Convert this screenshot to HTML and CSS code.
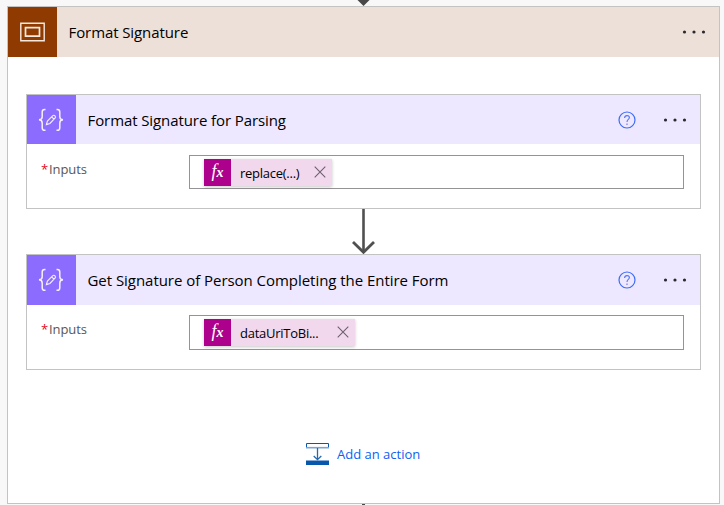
FILE: index.html
```html
<!DOCTYPE html>
<html lang="en">
<head>
<meta charset="utf-8">
<title>Format Signature</title>
<link rel="stylesheet" href="styles.css">
</head>
<body>
<svg class="defs" width="0" height="0" aria-hidden="true">
  <symbol id="compose" viewBox="0 0 26 24">
    <g fill="none" stroke="#f4efff" stroke-width="1.5">
      <path d="M7.5 1.5H6.6Q4.2 1.5 4.2 4V8.7Q4.2 11.6 1 11.8Q4.2 12 4.2 15V19.7Q4.2 22.3 6.6 22.3H7.5M18.5 1.5H19.4Q21.8 1.5 21.8 4V8.7Q21.8 11.6 25 11.8Q21.8 12 21.8 15V19.7Q21.8 22.3 19.4 22.3H18.5"/>
      <path stroke-width="1.1" d="M8.4 16.6L9.4 13L14.8 7.6Q16 6.8 17 7.8Q18 8.9 17.2 10L11.9 15.4ZM13.6 8.8L16 11.2"/>
    </g>
  </symbol>
  <symbol id="help" viewBox="0 0 18 18">
    <circle cx="9" cy="9" r="8" fill="none" stroke="#3b6cf6" stroke-width="1.2"/>
    <path d="M6.6 6.9Q6.7 4.6 9 4.6Q11.4 4.6 11.4 6.6Q11.4 7.7 10.1 8.6Q9 9.4 9 10.9" fill="none" stroke="#5375f2" stroke-width="1.1"/>
    <path d="M9 12.5V13.9" stroke="#7c83f3" stroke-width="1.3"/>
  </symbol>
  <symbol id="dots" viewBox="0 0 24 4">
    <g fill="#2b2930"><circle cx="2.5" cy="2" r="1.6"/><circle cx="12" cy="2" r="1.6"/><circle cx="21.5" cy="2" r="1.6"/></g>
  </symbol>
  <symbol id="close" viewBox="0 0 12 12">
    <path d="M.7 .7L11.3 11.3M11.3 .7L.7 11.3" stroke="#6c6070" stroke-width="1.1"/>
  </symbol>
</svg>

<svg class="entry" viewBox="0 0 14 6"><path d="M1.5 0H13.5L7.5 6Z" fill="#484848"/></svg>

<main class="scope">
  <header class="scope-head">
    <div class="badge scope-badge">
      <svg width="25" height="20" viewBox="0 0 25 20"><g fill="none" stroke="#f5e9df" stroke-width="1.4"><path d="M.8 1.2H24.2V18.8H.8Z"/><path d="M5.5 5.6H19.5V14.2H5.5Z" stroke-width="1.7"/></g></svg>
    </div>
    <h1 class="title scope-title">Format Signature</h1>
    <svg class="more"><use href="#dots"/></svg>
  </header>

  <div class="scope-body">
    <section class="card">
      <header class="card-head">
        <div class="badge"><svg class="compose"><use href="#compose"/></svg></div>
        <h2 class="title parse-title">Format Signature for Parsing</h2>
        <svg class="help"><use href="#help"/></svg>
        <svg class="more"><use href="#dots"/></svg>
      </header>
      <div class="field">
        <div class="label"><span class="star">*</span><span>Inputs</span></div>
        <div class="input">
          <div class="token token-replace"><span class="fx"><i>f</i><i class="x">x</i></span><span class="expr">replace(...)</span><svg class="close"><use href="#close"/></svg></div>
        </div>
      </div>
    </section>

    <svg class="arrow" viewBox="0 0 24 45"><g fill="none" stroke="#505050"><path d="M12.5 0V43" stroke-width="2.6"/><path d="M2 33L12.5 43.3L23 33" stroke-width="2.8"/></g></svg>

    <section class="card card-tall">
      <header class="card-head">
        <div class="badge"><svg class="compose"><use href="#compose"/></svg></div>
        <h2 class="title get-title">Get Signature of Person Completing the Entire Form</h2>
        <svg class="help"><use href="#help"/></svg>
        <svg class="more"><use href="#dots"/></svg>
      </header>
      <div class="field">
        <div class="label"><span class="star">*</span><span>Inputs</span></div>
        <div class="input">
          <div class="token token-data"><span class="fx"><i>f</i><i class="x">x</i></span><span class="expr">dataUriToBi...</span><svg class="close"><use href="#close"/></svg></div>
        </div>
      </div>
    </section>

    <div class="add">
      <svg width="23" height="22" viewBox="0 0 23 22"><path d="M.5 4.5V.5H22.5V4.5" fill="none" stroke="#0b57a8"/><path d="M0 4.7H23" stroke="#7ca5d2" stroke-width="1.6"/><path d="M11.5 5V16.5M7.7 13L11.5 16.7L15.3 13" fill="none" stroke="#2468af" stroke-width="1.3"/><path d="M0 17.5H23V22H0Z" fill="#0757ad"/></svg>
      <span>Add an action</span>
    </div>
  </div>
</main>
<svg class="exit" viewBox="0 0 4 1"><path d="M1 0H4V1H1Z" fill="#484848"/></svg>
</body>
</html>
```
FILE: styles.css
```css
* { box-sizing: border-box; }
body {
  margin: 0;
  height: 505px;
  overflow: hidden;
  background: #f8f8f8;
  font-family: "Open Sans", "Noto Sans", sans-serif;
  color: #000;
}
svg { display: block; flex: none; }
.defs { position: absolute; }
.entry { width: 14px; height: 6px; margin-left: 356px; }
.exit { width: 4px; height: 1px; margin-left: 361px; }

.scope {
  width: 713px;
  height: 498px;
  margin-left: 7px;
  border: 1px solid #c4c3c2;
  background: #fff;
}
.scope-head, .card-head { display: flex; align-items: center; }
.scope-head { height: 50px; padding-right: 13px; background: #ede0d9; }
.badge {
  display: flex;
  align-items: center;
  justify-content: center;
  width: 49px;
  height: 100%;
  flex: none;
  background: #8c6cff;
}
.scope-badge { background: #8f3a00; }
.title {
  margin: 0 auto 0 11.5px;
  font-size: 15px;
  font-weight: 400;
  line-height: 20px;
  white-space: nowrap;
}
.scope-title { letter-spacing: -.09px; }
.parse-title { letter-spacing: -.09px; }
.get-title { letter-spacing: -.04px; }
.more { width: 24px; height: 4px; }
.scope-head .more { margin-top: -1px; }
.scope-body { padding: 37px 18px 0; }

.card {
  height: 115px;
  border: 1px solid #c4c3c4;
  background: #fff;
}
.card-tall { height: 116px; }
.card-head { height: 49px; padding-right: 13px; background: #ede7ff; }
.card-tall .card-head { height: 50px; }
.compose { width: 26px; height: 24px; margin-right: 1px; }
.card-tall .compose { margin-top: -1px; }
.help { width: 18px; height: 18px; margin-right: 27px; }
.card-tall .help, .card-tall .more { margin-top: -1px; }

.field { display: flex; padding: 11px 16px 0 14px; }
.card-tall .field { padding-top: 10px; }
.label {
  display: flex;
  width: 148px;
  padding-top: 5px;
  font-size: 13px;
  line-height: 18px;
  letter-spacing: -.1px;
  color: #56565b;
}
.star { width: 8px; color: #e00b1c; }
.input {
  flex: 1;
  height: 34px;
  padding: 3px 14px;
  border: 1px solid #959396;
}
.card-tall .input { height: 35px; }
.token {
  display: flex;
  align-items: center;
  height: 27px;
  padding-right: 6px;
  background: #f2d8ed;
  box-shadow: 0 1px 3px rgba(0, 0, 0, .22);
  font-size: 13px;
}
.token-replace { width: 128px; }
.token-data { width: 151px; }
.fx {
  width: 27px;
  height: 27px;
  margin-right: 9px;
  background: #ad008c;
  color: #fff;
  font: 700 18px/25px "Liberation Serif", serif;
  text-align: center;
}
.fx i:first-child { font-weight: 400; }
.fx .x { font-size: 14px; }
.expr { flex: 1; line-height: 18px; white-space: nowrap; letter-spacing: -.26px; }
.close { width: 12px; height: 12px; margin-top: -2px; }
.arrow { width: 24px; height: 45px; margin-left: 325px; }
.add {
  display: flex;
  align-items: center;
  gap: 8px;
  margin: 73px 0 0 280px;
  font-size: 13px;
  line-height: 22px;
  color: #0b62f4;
}
```
